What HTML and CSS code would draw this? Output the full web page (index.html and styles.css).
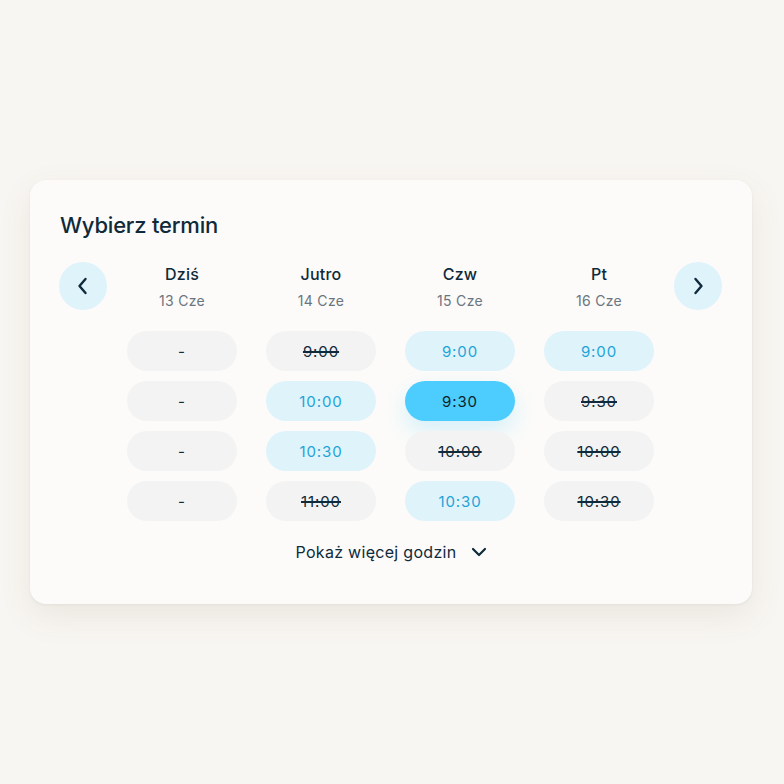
FILE: index.html
```html
<!DOCTYPE html>
<html lang="pl">
<head>
    <meta charset="UTF-8">
    <meta name="viewport" content="width=device-width, initial-scale=1.0">
    <title>Wybierz termin</title>
    <link rel="stylesheet" href="styles.css">
</head>
<body>
    <div class="card">
        <h2 class="title">Wybierz termin</h2>

        <div class="week">
            <button class="nav" aria-label="Poprzedni">
                <svg width="12" height="18" viewBox="0 0 12 18"><path d="M8.5 2 L2.5 9 L8.5 16" fill="none" stroke="#0f2a3a" stroke-width="2.4" stroke-linecap="round" stroke-linejoin="round"/></svg>
            </button>

            <div class="days">
                <div class="day">
                    <div class="day-head">
                        <div class="day-name">Dziś</div>
                        <div class="day-date">13 Cze</div>
                    </div>
                    <div class="slots">
                        <span class="slot">-</span>
                        <span class="slot">-</span>
                        <span class="slot">-</span>
                        <span class="slot">-</span>
                    </div>
                </div>
                <div class="day">
                    <div class="day-head">
                        <div class="day-name">Jutro</div>
                        <div class="day-date">14 Cze</div>
                    </div>
                    <div class="slots">
                        <span class="slot taken">9:00</span>
                        <span class="slot free">10:00</span>
                        <span class="slot free">10:30</span>
                        <span class="slot taken">11:00</span>
                    </div>
                </div>
                <div class="day">
                    <div class="day-head">
                        <div class="day-name">Czw</div>
                        <div class="day-date">15 Cze</div>
                    </div>
                    <div class="slots">
                        <span class="slot free">9:00</span>
                        <span class="slot selected">9:30</span>
                        <span class="slot taken">10:00</span>
                        <span class="slot free">10:30</span>
                    </div>
                </div>
                <div class="day">
                    <div class="day-head">
                        <div class="day-name">Pt</div>
                        <div class="day-date">16 Cze</div>
                    </div>
                    <div class="slots">
                        <span class="slot free">9:00</span>
                        <span class="slot taken">9:30</span>
                        <span class="slot taken">10:00</span>
                        <span class="slot taken">10:30</span>
                    </div>
                </div>
            </div>

            <button class="nav" aria-label="Następny">
                <svg width="12" height="18" viewBox="0 0 12 18"><path d="M3.5 2 L9.5 9 L3.5 16" fill="none" stroke="#0f2a3a" stroke-width="2.4" stroke-linecap="round" stroke-linejoin="round"/></svg>
            </button>
        </div>

        <button class="more">
            Pokaż więcej godzin
            <svg width="16" height="10" viewBox="0 0 16 10"><path d="M2 2 L8 8 L14 2" fill="none" stroke="#0f2a3a" stroke-width="2.2" stroke-linecap="round" stroke-linejoin="round"/></svg>
        </button>
    </div>
</body>
</html>
```

FILE: styles.css
```css
body {
    margin: 0;
    height: 100vh;
    background: #f8f6f2;
    font-family: Inter, "Noto Sans", sans-serif;
    color: #0f2a3a;
    display: flex;
    justify-content: center;
    align-items: center;
}
.card {
    width: 722px;
    margin-right: 2px;
    box-sizing: border-box;
    padding: 30px 29px 42px;
    background: #fcfbf9;
    border-radius: 16px;
    box-shadow: 0 12px 32px rgba(120, 100, 70, 0.10), 0 1px 3px rgba(0, 0, 0, 0.05);
}
.title {
    margin: 0 0 22px 1px;
    font-size: 22px;
    line-height: 30px;
    font-weight: 500;
    letter-spacing: -0.2px;
}
.week {
    display: flex;
    gap: 20px;
    align-items: flex-start;
}
.nav {
    width: 48px;
    height: 48px;
    border: none;
    border-radius: 50%;
    background: #dff3fb;
    padding: 0;
    display: flex;
    justify-content: center;
    align-items: center;
    cursor: pointer;
}
.days {
    display: flex;
    gap: 29px;
}
.day {
    width: 110px;
    display: flex;
    flex-direction: column;
}
.day-head {
    height: 48px;
    padding-top: 2px;
    box-sizing: border-box;
    text-align: center;
}
.day-name {
    font-size: 16px;
    line-height: 20px;
    font-weight: 500;
    letter-spacing: 0.2px;
}
.day-date {
    margin-top: 8px;
    font-size: 14px;
    line-height: 18px;
    letter-spacing: 0.3px;
    color: #6b7580;
}
.slots {
    margin-top: 21px;
    display: flex;
    flex-direction: column;
    gap: 10px;
}
.slot {
    height: 40px;
    border-radius: 20px;
    background: #f3f3f3;
    display: flex;
    justify-content: center;
    align-items: center;
    font-size: 15px;
    letter-spacing: 0.9px;
    color: #0f2a3a;
}
.slot.taken {
    text-decoration: line-through;
    text-decoration-thickness: 1.5px;
}
.slot.free {
    background: #dff3fb;
    color: #1ea3d8;
}
.slot.selected {
    background: #4dcdfe;
    color: #0c1f2b;
    box-shadow: 0 10px 22px rgba(77, 205, 254, 0.22);
}
.more {
    margin: 21px auto 0;
    padding: 0;
    border: none;
    background: none;
    display: flex;
    align-items: center;
    gap: 14px;
    font-family: inherit;
    font-size: 16px;
    line-height: 20px;
    letter-spacing: 0.3px;
    color: #0f2a3a;
    cursor: pointer;
}
```
